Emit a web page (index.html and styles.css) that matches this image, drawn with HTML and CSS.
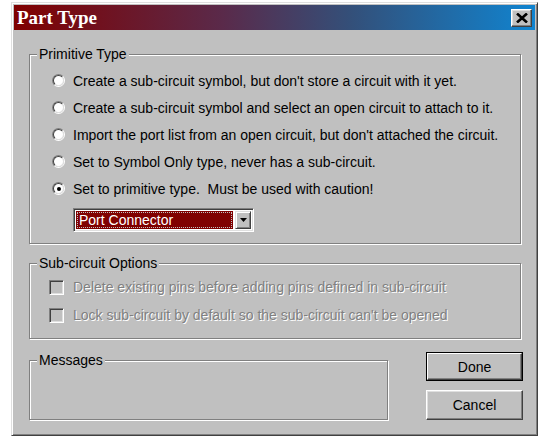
FILE: index.html
```html
<!DOCTYPE html>
<html>
<head>
<meta charset="utf-8">
<title>Part Type</title>
<link rel="stylesheet" href="styles.css">
</head>
<body>
<div class="window">
  <div class="titlebar">
    <span class="title">Part Type</span>
    <button class="close" aria-label="Close">
      <svg width="12" height="10" viewBox="0 0 12 10">
        <path d="M1 0.5 L11 9.5 M11 0.5 L1 9.5" stroke="#000" stroke-width="2.6"/>
      </svg>
    </button>
  </div>
  <div class="client">
    <div class="group primitive">
      <div class="caption">Primitive Type</div>
      <div class="options">
        <label class="row"><span class="radio"><span class="radio-in"></span></span>Create a sub-circuit symbol, but don't store a circuit with it yet.</label>
        <label class="row"><span class="radio"><span class="radio-in"></span></span>Create a sub-circuit symbol and select an open circuit to attach to it.</label>
        <label class="row"><span class="radio"><span class="radio-in"></span></span>Import the port list from an open circuit, but don't attached the circuit.</label>
        <label class="row"><span class="radio"><span class="radio-in"></span></span>Set to Symbol Only type, never has a sub-circuit.</label>
        <label class="row"><span class="radio"><span class="radio-in checked"></span></span>Set to primitive type.&nbsp; Must be used with caution!</label>
      </div>
      <div class="combo">
        <div class="combo-value"><span class="focus">Port Connector</span></div>
        <div class="combo-btn">
          <svg width="7" height="4" viewBox="0 0 7 4"><path d="M0 0 H7 L3.5 4 Z" fill="#000"/></svg>
        </div>
      </div>
    </div>

    <div class="group subcircuit">
      <div class="caption">Sub-circuit Options</div>
      <div class="checks">
        <div class="row disabled"><span class="check"></span>Delete existing pins before adding pins defined in sub-circuit</div>
        <div class="row disabled"><span class="check"></span>Lock sub-circuit by default so the sub-circuit can't be opened</div>
      </div>
    </div>

    <div class="bottom">
      <div class="group messages">
        <div class="caption">Messages</div>
      </div>
      <div class="buttons">
        <button class="btn default"><span>Done</span></button>
        <button class="btn"><span>Cancel</span></button>
      </div>
    </div>
  </div>
</div>
</body>
</html>
```

FILE: styles.css
```css
* { box-sizing: border-box; }

body {
  margin: 0;
  background: #fff;
  font-family: "Liberation Sans", Arial, sans-serif;
  font-size: 14px;
  color: #000;
}

/* outer dialog frame, classic raised 3D edge */
.window {
  margin: 2px 0 0 11px;
  width: 527px;
  height: 434px;
  background: #c0c0c0;
  border: 1px solid;
  border-color: #dfdfdf #404040 #404040 #dfdfdf;
  box-shadow: inset 1px 1px 0 #fff, inset -1px -1px 0 #808080;
  padding: 2px;
  display: flex;
  flex-direction: column;
}

.titlebar {
  height: 25px;
  background: linear-gradient(to right, #800000 0%, #5a2a4a 40%, #33507a 65%, #1084d0 100%);
  display: flex;
  align-items: center;
  justify-content: space-between;
  padding: 0 3px 0 3px;
}

.title {
  font-family: "Liberation Serif", "Times New Roman", serif;
  font-weight: bold;
  font-size: 19px;
  color: #fff;
  line-height: 25px;
}

.close {
  width: 21px;
  height: 18px;
  padding: 0;
  background: #c0c0c0;
  border: 1px solid;
  border-color: #fff #404040 #404040 #fff;
  box-shadow: inset -1px -1px 0 #808080, inset 1px 1px 0 #dfdfdf;
  display: flex;
  align-items: center;
  justify-content: center;
}

.client {
  flex: 1;
  padding: 24px 12px 0 15px;
  display: flex;
  flex-direction: column;
}

/* etched group box */
.group {
  border: 1px solid #808080;
  box-shadow: inset 1px 1px 0 #fff, 1px 1px 0 #fff;
  margin-right: 2px;
}

.caption {
  width: fit-content;
  margin: -9px 0 0 7px;
  padding: 0 2px;
  background: #c0c0c0;
  line-height: 16px;
}

.primitive {
  height: 190px;
}

.options {
  padding: 5px 0 0 22px;
}

.row {
  display: flex;
  align-items: center;
  height: 27px;
  white-space: nowrap;
}

/* radio button */
.radio {
  width: 13px;
  height: 13px;
  border-radius: 50%;
  border: 1px solid;
  border-color: #808080 #fff #fff #808080;
  margin-right: 8px;
  flex: none;
}

.radio-in {
  display: flex;
  align-items: center;
  justify-content: center;
  width: 11px;
  height: 11px;
  border-radius: 50%;
  border: 1px solid;
  border-color: #404040 #dfdfdf #dfdfdf #404040;
  background: #fff;
}

.radio-in.checked::after {
  content: "";
  width: 4px;
  height: 4px;
  border-radius: 50%;
  background: #000;
}

/* drop-down list */
.combo {
  margin: 6px 0 0 43px;
  width: 181px;
  height: 24px;
  border: 1px solid;
  border-color: #808080 #fff #fff #808080;
  box-shadow: inset 1px 1px 0 #404040, inset -1px -1px 0 #dfdfdf;
  background: #fff;
  padding: 2px;
  display: flex;
  gap: 2px;
}

.combo-value {
  flex: 1;
  background: #800000;
  color: #fff;
  padding: 1px;
  display: flex;
}

.focus {
  flex: 1;
  outline: 1px dotted #c0c0c0;
  outline-offset: -1px;
  padding-left: 2px;
  line-height: 16px;
}

.combo-btn {
  width: 16px;
  background: #c0c0c0;
  border: 1px solid;
  border-color: #dfdfdf #404040 #404040 #dfdfdf;
  box-shadow: inset 1px 1px 0 #fff, inset -1px -1px 0 #808080;
  display: flex;
  align-items: center;
  justify-content: center;
}

.subcircuit {
  margin-top: 19px;
  height: 76px;
}

.checks {
  padding: 2px 0 0 19px;
}

.checks .row {
  height: 28px;
}

/* disabled checkbox */
.check {
  width: 15px;
  height: 15px;
  flex: none;
  margin-right: 9px;
  border: 1px solid;
  border-color: #808080 #fff #fff #808080;
  box-shadow: inset 1px 1px 0 #404040, inset -1px -1px 0 #dfdfdf;
  background: #c0c0c0;
}

.disabled {
  color: #808080;
  text-shadow: 1px 1px 0 #fff;
}

.bottom {
  margin-top: 13px;
  display: flex;
  justify-content: space-between;
  align-items: flex-start;
}

.messages {
  margin-top: 8px;
  width: 359px;
  height: 60px;
}

.buttons {
  display: flex;
  flex-direction: column;
  gap: 9px;
  width: 97px;
}

.btn {
  height: 29px;
  padding: 0;
  font: inherit;
  background: #c0c0c0;
  border: 1px solid;
  border-color: #fff #404040 #404040 #fff;
  box-shadow: inset -1px -1px 0 #808080, inset 1px 1px 0 #dfdfdf;
  color: #000;
}

.btn.default {
  height: 29px;
  border: 1px solid #000;
  padding: 0;
}

.btn.default span {
  display: flex;
  align-items: center;
  justify-content: center;
  height: 100%;
  border: 1px solid;
  border-color: #fff #404040 #404040 #fff;
  box-shadow: inset -1px -1px 0 #808080;
}

.btn.default {
  box-shadow: none;
}

.buttons .btn:last-child {
  height: 30px;
}
```
